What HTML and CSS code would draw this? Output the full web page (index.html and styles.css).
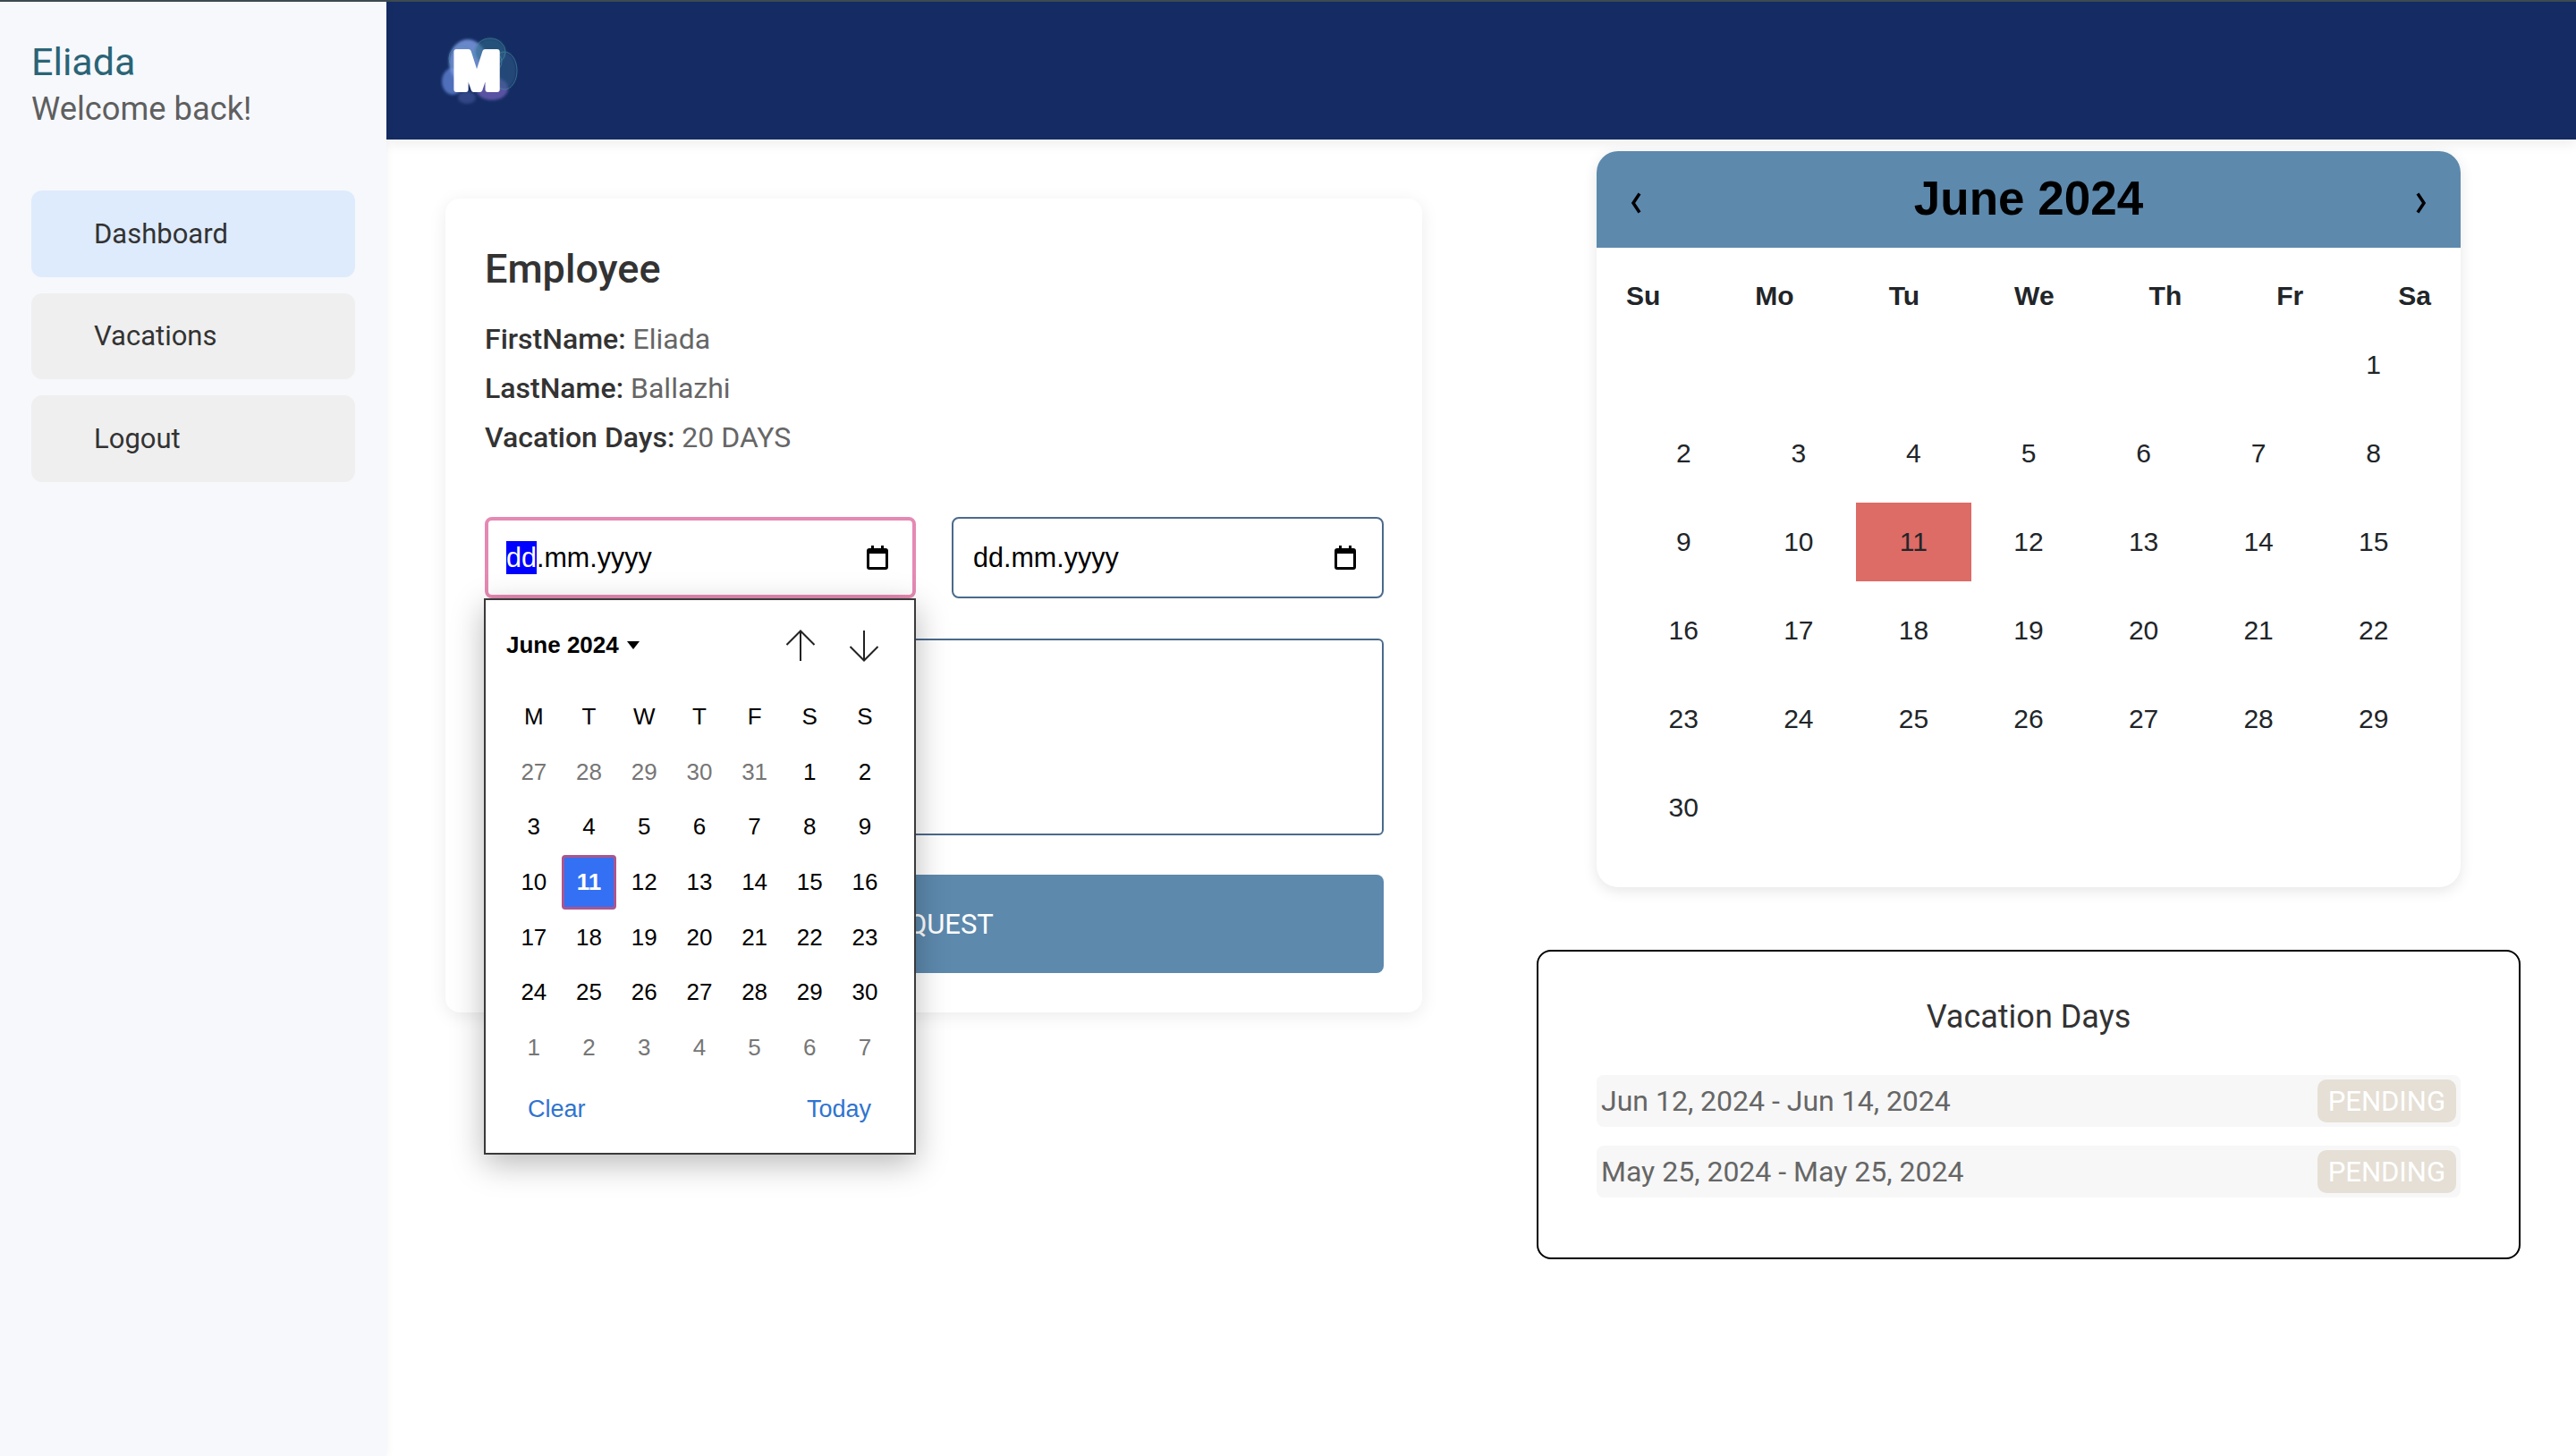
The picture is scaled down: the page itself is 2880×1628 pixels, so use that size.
FILE: index.html
```html
<!DOCTYPE html>
<html lang="en">
<head>
  <meta charset="UTF-8">
  <title>Dashboard</title>
  <link rel="stylesheet" href="styles.css">
</head>
<body>

<div class="page">
  <aside class="sidebar">
    <div class="user">
      <div class="user-name">Eliada</div>
      <div class="user-hello">Welcome back!</div>
    </div>
    <nav class="nav">
      <a class="nav-item active">Dashboard</a>
      <a class="nav-item">Vacations</a>
      <a class="nav-item">Logout</a>
    </nav>
  </aside>

  <div class="main">
    <header class="topbar">
      <svg class="logo" width="90" height="80" viewBox="0 0 90 80">
        <defs>
          <filter id="soft"><feGaussianBlur stdDeviation="1.4"/></filter>
        </defs>
        <g filter="url(#soft)">
          <ellipse cx="14" cy="52" rx="12" ry="15" fill="#6a8ce0" opacity=".7"/>
          <ellipse cx="31" cy="30" rx="21" ry="25" fill="#7f9fe6" opacity=".8"/>
          <ellipse cx="58" cy="60" rx="18" ry="13" fill="#7060b8" opacity=".75"/>
          <ellipse cx="30" cy="70" rx="10" ry="7" fill="#4d5da8" opacity=".5"/>
          <ellipse cx="56" cy="19" rx="17" ry="15" fill="#2f6a88" opacity=".6"/>
          <ellipse cx="72" cy="40" rx="13" ry="21" fill="#2f5f88" opacity=".55"/>
        </g>
        <g fill="none" stroke="#4d93a6" stroke-width="1" opacity=".6">
          <ellipse cx="56" cy="19" rx="17" ry="15"/>
          <ellipse cx="72" cy="40" rx="14" ry="21"/>
          <ellipse cx="24" cy="26" rx="14" ry="14"/>
          <ellipse cx="60" cy="30" rx="9" ry="10"/>
        </g>
        <text class="logo-m" x="41" y="61" text-anchor="middle">M</text>
      </svg>
    </header>

    <div class="content">
      <section class="employee">
        <h2 class="employee-title">Employee</h2>
        <p class="info"><b>FirstName:</b> Eliada</p>
        <p class="info"><b>LastName:</b> Ballazhi</p>
        <p class="info"><b>Vacation Days:</b> 20 DAYS</p>

        <div class="dates">
          <div class="date-wrap">
            <div class="date-box focused">
              <span><span class="date-part">dd</span>.mm.yyyy</span>
              <svg class="date-icon" width="24" height="27" viewBox="0 0 24 27">
                <path d="M5 0h3v3h8V0h3v3h2a3 3 0 0 1 3 3v18a3 3 0 0 1-3 3H3a3 3 0 0 1-3-3V6a3 3 0 0 1 3-3h2z M3 9v15h18V9z" fill="#000" fill-rule="evenodd"/>
              </svg>
            </div>

            <div class="picker">
              <div class="picker-head">
                <span class="picker-month">June 2024 <i class="caret"></i></span>
                <span class="picker-arrows">
                  <svg width="34" height="36" viewBox="0 0 34 36"><path d="M17 35V1.5M1.5 17 17 1.5 32.500 17" fill="none" stroke="#222" stroke-width="2"/></svg>
                  <svg width="34" height="36" viewBox="0 0 34 36"><path d="M17 1v33.500M1.500 19 17 34.500 32.500 19" fill="none" stroke="#222" stroke-width="2"/></svg>
                </span>
              </div>
              <div class="picker-grid">
                <span>M</span><span>T</span><span>W</span><span>T</span><span>F</span><span>S</span><span>S</span>
                <span class="off">27</span><span class="off">28</span><span class="off">29</span><span class="off">30</span><span class="off">31</span><span>1</span><span>2</span>
                <span>3</span><span>4</span><span>5</span><span>6</span><span>7</span><span>8</span><span>9</span>
                <span>10</span><span class="picked">11</span><span>12</span><span>13</span><span>14</span><span>15</span><span>16</span>
                <span>17</span><span>18</span><span>19</span><span>20</span><span>21</span><span>22</span><span>23</span>
                <span>24</span><span>25</span><span>26</span><span>27</span><span>28</span><span>29</span><span>30</span>
                <span class="off">1</span><span class="off">2</span><span class="off">3</span><span class="off">4</span><span class="off">5</span><span class="off">6</span><span class="off">7</span>
              </div>
              <div class="picker-foot">
                <a>Clear</a>
                <a>Today</a>
              </div>
            </div>
          </div>

          <div class="date-box">
            <span>dd.mm.yyyy</span>
            <svg class="date-icon" width="24" height="27" viewBox="0 0 24 27">
              <path d="M5 0h3v3h8V0h3v3h2a3 3 0 0 1 3 3v18a3 3 0 0 1-3 3H3a3 3 0 0 1-3-3V6a3 3 0 0 1 3-3h2z M3 9v15h18V9z" fill="#000" fill-rule="evenodd"/>
            </svg>
          </div>
        </div>

        <div class="reason"></div>
        <button class="send">REQUEST</button>
      </section>

      <div class="side">
        <section class="calendar">
          <div class="calendar-head">
            <svg class="calendar-nav" width="12" height="24" viewBox="0 0 12 24"><path d="M10 1.500 3 12l7 10.500" fill="none" stroke="#000" stroke-width="3.500"/></svg>
            <span class="calendar-title">June 2024</span>
            <svg class="calendar-nav" width="12" height="24" viewBox="0 0 12 24"><path d="M2 1.500 9 12 2 22.500" fill="none" stroke="#000" stroke-width="3.500"/></svg>
          </div>
          <div class="calendar-body">
            <div class="week">
              <span>Su</span><span>Mo</span><span>Tu</span><span>We</span><span>Th</span><span>Fr</span><span>Sa</span>
            </div>
            <div class="days">
              <span></span><span></span><span></span><span></span><span></span><span></span><span>1</span>
              <span>2</span><span>3</span><span>4</span><span>5</span><span>6</span><span>7</span><span>8</span>
              <span>9</span><span>10</span><span class="today">11</span><span>12</span><span>13</span><span>14</span><span>15</span>
              <span>16</span><span>17</span><span>18</span><span>19</span><span>20</span><span>21</span><span>22</span>
              <span>23</span><span>24</span><span>25</span><span>26</span><span>27</span><span>28</span><span>29</span>
              <span>30</span>
            </div>
          </div>
        </section>

        <section class="vacations">
          <h3 class="vacations-title">Vacation Days</h3>
          <div class="vacation-row">
            <span>Jun 12, 2024 - Jun 14, 2024</span>
            <span class="badge">PENDING</span>
          </div>
          <div class="vacation-row">
            <span>May 25, 2024 - May 25, 2024</span>
            <span class="badge">PENDING</span>
          </div>
        </section>
      </div>
    </div>
  </div>
</div>

</body>
</html>
```

FILE: styles.css
```css
* {
  box-sizing: border-box;
}

body {
  margin: 0;
  background: #fff;
  font-family: Roboto, Arial, sans-serif;
  color: #333;
}

.page {
  display: flex;
  width: 2880px;
  height: 1628px;
  overflow: hidden;
  border-top: 2px solid #3d4a50;
}

/* sidebar */
.sidebar {
  width: 432px;
  flex: none;
  padding: 0 35px;
  background: #f6f8fc;
  box-shadow: 1px 0 8px rgba(0,0,0,0.05);
  position: relative;
}

.user {
  padding-top: 38px;
  height: 211px;
}

.user-name {
  font-size: 43px;
  line-height: 58px;
  color: #2a6476;
}

.user-hello {
  font-size: 36.3px;
  line-height: 48px;
  color: #5f5f5f;
}

.nav {
  display: flex;
  flex-direction: column;
  gap: 18px;
}

.nav-item {
  display: flex;
  align-items: center;
  height: 96.5px;
  padding-left: 70px;
  border-radius: 12px;
  background: #efefef;
  font-size: 31px;
  color: #333;
}

.nav-item.active {
  background: #deebfc;
}

/* top bar */
.main {
  flex: 1;
  min-width: 0;
}

.topbar {
  height: 154px;
  display: flex;
  align-items: center;
  padding-left: 60px;
  background: #142c63;
  box-shadow: 0 4px 14px rgba(0,0,0,0.08);
}

.logo-m {
  font-family: Roboto, sans-serif;
  font-weight: 900;
  font-size: 59px;
  fill: #fff;
  stroke: #fff;
  stroke-width: 6px;
  stroke-linejoin: round;
}

.content {
  display: flex;
  align-items: flex-start;
}

/* employee card */
.employee {
  width: 1092px;
  margin: 66px 0 0 66px;
  padding: 44px 43px 44px 44px;
  border-radius: 16px;
  background: #fff;
  box-shadow: 0 4px 20px rgba(0,0,0,0.08);
}

.employee-title {
  margin: 0 0 16px;
  font-size: 45px;
  line-height: 70px;
  font-weight: 500;
}

.info {
  margin: 0;
  font-size: 32px;
  line-height: 55px;
  color: #666;
}

.info b {
  font-weight: 500;
  color: #333;
}

.dates {
  display: flex;
  gap: 40px;
  margin-top: 61px;
}

.date-wrap {
  position: relative;
  width: 482px;
}

.date-box {
  display: flex;
  align-items: center;
  justify-content: space-between;
  flex: 1;
  height: 91px;
  padding: 0 29px 0 22px;
  border: 2px solid #4a6a8c;
  border-radius: 8px;
  font-family: "Liberation Sans", Arial, sans-serif;
  font-size: 30.5px;
  color: #000;
}

.date-box.focused {
  border: 4px solid #e589b3;
  padding: 0 27px 0 20px;
}

.date-part {
  display: inline-block;
  height: 37px;
  line-height: 37px;
  background: #0000ff;
  color: #fff;
}

/* date picker popup */
.picker {
  position: absolute;
  top: 100%;
  left: -1px;
  z-index: 5;
  width: 483px;
  height: 622px;
  padding: 0 23px;
  border: 2px solid #3a3a3a;
  background: #fff;
  box-shadow: 0 10px 34px rgba(0,0,0,0.28);
  font-family: "Liberation Sans", Arial, sans-serif;
  font-size: 26px;
  color: #000;
}

.picker-head {
  display: flex;
  align-items: center;
  justify-content: space-between;
  height: 100px;
}

.picker-month {
  font-weight: 700;
}

.caret {
  display: inline-block;
  margin-left: 2px;
  vertical-align: 4px;
  border-top: 9px solid #000;
  border-left: 7px solid transparent;
  border-right: 7px solid transparent;
}

.picker-arrows {
  display: flex;
  gap: 37px;
  margin-right: 16px;
  padding-top: 2px;
}

.picker-grid {
  display: grid;
  grid-template-columns: repeat(7, 61.7px);
  grid-auto-rows: 61.6px;
}

.picker-grid span {
  display: flex;
  align-items: center;
  justify-content: center;
}

.picker-grid .off {
  color: #767676;
}

.picker-grid .picked {
  border: 3px solid #a9568f;
  border-radius: 4px;
  background: #3370f4;
  color: #fff;
  font-weight: 700;
}

.picker-foot {
  display: flex;
  justify-content: space-between;
  padding: 23px 25px 0 24px;
  font-size: 27px;
  color: #2f74d0;
}

/* message box and button */
.reason {
  height: 220px;
  margin-top: 45px;
  border: 2px solid #4a6a8c;
  border-radius: 6px;
}

.send {
  display: block;
  width: 100%;
  height: 110px;
  margin-top: 44px;
  border: 0;
  border-radius: 8px;
  background: #5d89ad;
  font-family: Roboto, Arial, sans-serif;
  font-size: 31px;
  color: #fff;
}

/* right column */
.side {
  display: flex;
  flex-direction: column;
  align-items: center;
  width: 1100px;
  margin-left: 128px;
}

.calendar {
  width: 966px;
  margin-top: 13px;
  border-radius: 24px;
  background: #fff;
  box-shadow: 0 4px 16px rgba(0,0,0,0.1);
  font-family: "Liberation Sans", Arial, sans-serif;
  color: #212529;
}

.calendar-head {
  display: flex;
  align-items: center;
  justify-content: space-between;
  height: 108px;
  padding: 0 38px;
  border-radius: 24px 24px 0 0;
  background: #5d89ad;
  color: #000;
}

.calendar-title {
  font-size: 53px;
  font-weight: 700;
  margin-top: -4px;
}

.calendar-nav {
  margin-top: 8px;
}

.calendar-body {
  padding: 37px 33px 45px;
}

.week {
  display: flex;
  justify-content: space-between;
  font-size: 30px;
  font-weight: 700;
}

.days {
  display: grid;
  grid-template-columns: repeat(7, 1fr);
  grid-auto-rows: 88px;
  row-gap: 11px;
  margin-top: 16px;
  font-size: 30px;
}

.days span {
  display: flex;
  align-items: center;
  justify-content: center;
}

.days .today {
  background: #dd6b66;
}

/* vacation list */
.vacations {
  width: 1100px;
  height: 346px;
  margin-top: 70px;
  padding: 0 65px;
  border: 2px solid #000;
  border-radius: 16px;
}

.vacations-title {
  margin: 49px 0 41px;
  font-size: 36px;
  line-height: 48px;
  font-weight: 400;
  text-align: center;
}

.vacation-row {
  display: flex;
  align-items: center;
  justify-content: space-between;
  height: 58px;
  margin-bottom: 21px;
  padding: 0 5px;
  border-radius: 8px;
  background: #f7f7f7;
  font-size: 32px;
  color: #666;
}

.badge {
  display: flex;
  align-items: center;
  height: 48px;
  padding: 0 12px;
  border-radius: 10px;
  background: #e5dfd5;
  font-size: 31px;
  color: #fff;
}
```
